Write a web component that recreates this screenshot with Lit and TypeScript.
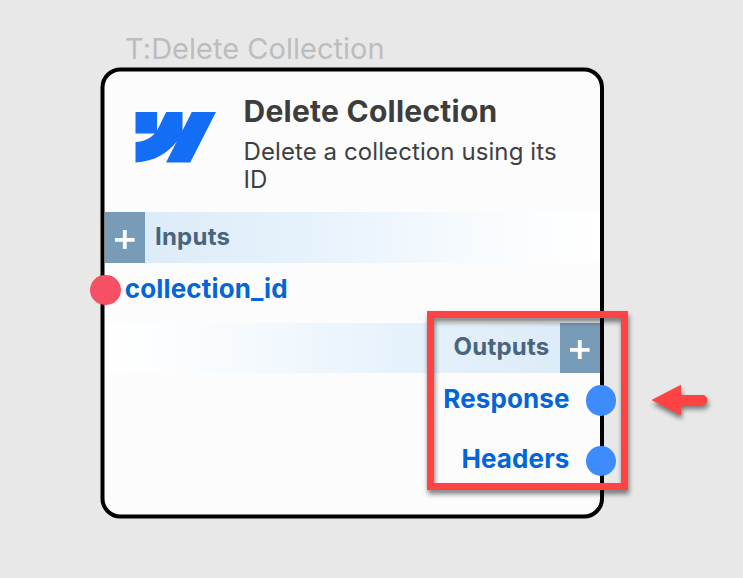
import { LitElement, html, css, svg } from "lit";
import { customElement } from "lit/decorators.js";

const plus = svg`<path d="M0 9.8H19.6M9.8 0V19.6" stroke="#fff" stroke-width="3.8" fill="none"/>`;

@customElement("app-root")
export class AppRoot extends LitElement {
  static styles = css`
    :host { display: block; position: relative; width: 743px; height: 578px; overflow: hidden;
      box-sizing: border-box; padding: 33px 0 0 100px; background: #e8e8e8;
      font-family: Inter, "Liberation Sans", sans-serif; }
    .caption { height: 34px; padding-left: 25px; font-size: 29px; line-height: 32px; letter-spacing: 0.02px; color: #bdbdbd; white-space: nowrap; }
    .node { position: relative; width: 504px; height: 452px; box-sizing: border-box; padding: 4.5px 4px 4px 4.5px; }
    .frame { position: absolute; left: 0; top: 0; }
    .body { position: relative; }
    .head { display: flex; height: 140.8px; box-sizing: border-box; padding: 21px 0 0 30.5px; }
    .logo { width: 82px; height: 52px; margin-top: 18px; flex: none; }
    .words { margin-left: 26.5px; width: 330px; }
    .title { font-size: 30px; line-height: 36px; font-weight: 700; letter-spacing: 0.25px; color: #3d3d3d; white-space: nowrap; }
    .desc { margin-top: 9px; font-size: 24px; line-height: 28px; letter-spacing: 0.09px; color: #404040; }
    .band { display: flex; align-items: stretch; height: 50.4px; font-size: 24px; font-weight: 700; line-height: 50px; letter-spacing: 0.22px; color: #4b647e;
      background: linear-gradient(90deg, #d9eaf7, #e8f3fc 45%, #f7fbfe 75%, #fff); }
    .band.out { justify-content: flex-end; line-height: 48px; background: linear-gradient(270deg, #d9eaf7, #e8f3fc 45%, #f7fbfe 75%, #fff); }
    .band.in .label { padding-left: 10px; }
    .band.out .label { padding-right: 10px; }
    .add { display: flex; align-items: center; justify-content: center; width: 40.5px; background: #789bb7; }
    .add svg { width: 19.6px; height: 19.6px; margin-top: 4px; }
    .out .add svg { margin-top: 3px; }
    .port { position: relative; height: 60.2px; line-height: 52px; font-size: 26px; font-weight: 700; letter-spacing: 0.1px; color: #0265d8; }
    .port.in { padding-left: 20.2px; line-height: 51px; letter-spacing: 0.16px; }
    .port.out { padding-right: 30.5px; text-align: right; }
    .dot { position: absolute; top: 12.1px; width: 30.4px; height: 30.4px; border-radius: 50%; }
    .in .dot { left: -14.1px; background: #f55064; }
    .out .dot { right: -16.2px; background: #3d8bfd; }
    .mark { position: absolute; left: 427px; top: 311px; width: 201px; height: 179px; box-sizing: border-box;
      border: 7px solid #ff4242; filter: drop-shadow(1px 4px 2.5px rgba(0,0,0,.5)); }
    .arrow { position: absolute; left: 640px; top: 376px; width: 80px; height: 52px; overflow: visible;
      filter: drop-shadow(1px 4px 2.5px rgba(0,0,0,.5)); }
  `;

  private port(side: "in" | "out", name: string) {
    return html`<div class="port ${side}"><span>${name}</span><i class="dot"></i></div>`;
  }

  render() {
    const add = html`<div class="add"><svg viewBox="0 0 19.6 19.6">${plus}</svg></div>`;
    return html`
      <div class="caption">T:Delete Collection</div>
      <div class="node">
        <svg class="frame" width="504" height="452" viewBox="0 0 504 452">
          <rect x="2.5" y="2.5" width="499.5" height="447" rx="18" fill="#fcfcfc" stroke="#000" stroke-width="4"/>
        </svg>
        <div class="body">
          <div class="head">
            <svg class="logo" viewBox="135.5 110.5 82 52">
              <path fill="#146ef5" d="M136 111.5H157.6V130L166.7 111.5H183V130L192.3 111.5H216.5L190.7 162H166.5L177.4 140.8C168.5 152.5 155.5 161 136 162V141.4C144.5 141 150.5 138 155.2 132.9H136Z"/>
            </svg>
            <div class="words">
              <div class="title">Delete Collection</div>
              <div class="desc">Delete a collection using its ID</div>
            </div>
          </div>
          <div class="band in">${add}<div class="label">Inputs</div></div>
          ${this.port("in", "collection_id")}
          <div class="band out"><div class="label">Outputs</div>${add}</div>
          ${this.port("out", "Response")}
          ${this.port("out", "Headers")}
        </div>
      </div>
      <div class="mark"></div>
      <svg class="arrow" viewBox="640 376 80 52">
        <path fill="#ff4242" d="M651.5 400L681 384.8V395H702.5A5 5 0 0 1 702.5 405H681V415.3Z"/>
      </svg>`;
  }
}
